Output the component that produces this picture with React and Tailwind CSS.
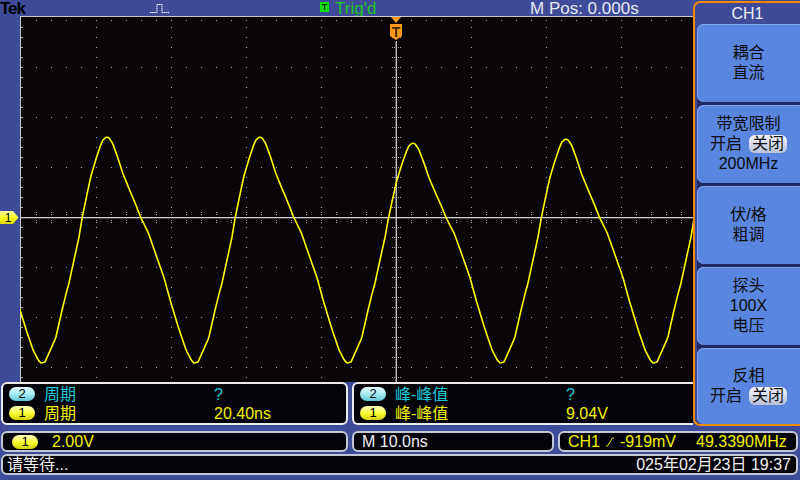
const FONT = "font-['Liberation_Sans','Noto_Sans_CJK_SC',sans-serif]";

// one period of the trace, measured from the trough (page x 41): [t, y]
const PERIOD = [
  [0, 363], [4, 362], [8, 353], [14.7, 338], [21.3, 309], [25, 294], [28, 283], [33, 260], [38, 237], [41.3, 217],
  [46.3, 193], [49.7, 177], [54.7, 160], [59.7, 145], [62, 140], [65.3, 137], [68, 138], [71.5, 143], [76.6, 157],
  [81.7, 173], [88.6, 190], [93.7, 202], [99.6, 217], [107.4, 233], [114.3, 253], [122.8, 277], [129.7, 302],
  [138.2, 330], [145.1, 350], [150.2, 360], [153, 363],
];
const PEAK_DROP = { 2: 6, 3: 2 };

function traceY(x) {
  const rel = x - 41;
  const k = Math.floor(rel / 153);
  const t = rel - k * 153;
  let y = 363;
  for (let i = 1; i < PERIOD.length; i++) {
    const [t0, y0] = PERIOD[i - 1];
    const [t1, y1] = PERIOD[i];
    if (t <= t1) {
      y = y0 + ((t - t0) / (t1 - t0)) * (y1 - y0);
      break;
    }
  }
  const drop = PEAK_DROP[k] || 0;
  return y + drop * Math.max(0, (250 - y) / 113);
}

function Scope() {
  // drawing coords: origin is page (20, 15); the svg shows page y 16..382
  let d = '';
  const dot = (x, y, w = 1) => { d += `M${x} ${y}h${w}v1h-${w}z`; };
  for (const y of [52, 102, 152, 252, 302, 352]) for (let x = 16; x < 673; x += 15) dot(x, y);
  for (const x of [76, 151, 226, 301, 451, 526, 601]) for (let y = 12; y < 367; y += 10) dot(x, y);
  for (let x = 16; x < 673; x += 15) for (const o of [-5, -3, 3, 5]) dot(x, 202 + o);
  for (let y = 12; y < 367; y += 10) for (const o of [-4, -2, 2, 4]) dot(376 + o, y);
  for (let x = 16; x < 673; x += 15) dot(x, 5);
  for (let y = 12; y < 367; y += 10) dot(1, y, 2);

  const pts = [];
  for (let x = 20; x <= 694; x++) pts.push(`${x - 20},${(traceY(x) - 15).toFixed(1)}`);

  return (
    <svg width="673" height="366" viewBox="0 1 673 366" className="block bg-[#0a0608]">
      <path d={d} fill="#a4a4a4" />
      <rect x="0" y="1" width="673" height="1" fill="#c8c8c8" />
      <rect x="0" y="1" width="1" height="366" fill="#c8c8c8" />
      <rect x="0" y="202" width="673" height="1.3" fill="#cfcfcf" />
      <rect x="375.6" y="26" width="1.3" height="341" fill="#cfcfcf" />
      <polyline points={pts.join(' ')} fill="none" stroke="#ffff00" strokeWidth="1.6" strokeLinejoin="round" />
      <polygon points="371,2 381,2 376,8" fill="#ff9a1a" />
      <path d="M370 9h12v12l-6 4l-6-4z" fill="#ff9a1a" />
      <text x="376" y="22" textAnchor="middle" fontSize="14" fontWeight="bold" fill="#4a2800" fontFamily="Liberation Sans">T</text>
    </svg>
  );
}

function GroundMarker() {
  return (
    <svg width="19" height="13" className="block">
      <defs>
        <linearGradient id="gm" x1="0" y1="0" x2="0" y2="1">
          <stop offset="0" stopColor="#ffffb0" />
          <stop offset="0.5" stopColor="#ffff20" />
          <stop offset="1" stopColor="#d8d800" />
        </linearGradient>
      </defs>
      <path d="M0 0h13l5.5 6.5l-5.5 6.5h-13z" fill="url(#gm)" />
      <text x="8" y="11" textAnchor="middle" fontSize="12" fill="#000" fontFamily="Liberation Sans">1</text>
    </svg>
  );
}

function TopBar() {
  return (
    <div className="h-[16px] flex items-start leading-[18px] whitespace-nowrap">
      <div className="w-[150px] text-[17px] font-bold text-black tracking-[-1px]">Tek</div>
      <div className="w-[170px] pt-[3px]">
        <svg width="19" height="11" className="block">
          <path d="M0 9.5h7v-8h5v8h7" fill="none" stroke="#ffffff" strokeWidth="1" strokeDasharray="1.5 0.6" />
        </svg>
      </div>
      <div className="w-[210px] flex items-start">
        <span className="mt-[2px] w-[9px] h-[10px] bg-[#10e010] text-[9px] leading-[10px] font-bold text-[#063006] flex justify-center">T</span>
        <span className="ml-[6px] text-[17px] text-[#20c820]">Trig'd</span>
      </div>
      <div className="text-[17px] text-[#e6e8f2]">M Pos: 0.000s</div>
    </div>
  );
}

function Badge({ n, tone }) {
  const c = tone === 'cyan'
    ? 'from-[#e4fcff] via-[#a6ecf4] to-[#5cc8d8]'
    : 'from-[#ffffb8] via-[#ffff30] to-[#d0d000]';
  return (
    <span className={`w-[26px] h-[14px] rounded-full bg-linear-to-b ${c} text-black text-[13px] leading-[14px] flex justify-center shrink-0`}>
      {n}
    </span>
  );
}

function MeasRow({ n, tone, label, value, labelW }) {
  const col = tone === 'cyan' ? 'text-[#1cc8d8]' : 'text-[#f2f200]';
  return (
    <div className={`flex items-center h-[19px] ${col}`}>
      <Badge n={n} tone={tone} />
      <span className={`ml-[9px] ${labelW}`}>{label}</span>
      <span>{value}</span>
    </div>
  );
}

function MeasBox({ className, label, v2, v1, labelW }) {
  return (
    <div className={`h-[43px] bg-[#05030a] border-2 border-[#ececec] flex flex-col justify-center pl-[6px] leading-[19px] ${className}`}>
      <MeasRow n="2" tone="cyan" label={label} value={v2} labelW={labelW} />
      <MeasRow n="1" tone="yellow" label={label} value={v1} labelW={labelW} />
    </div>
  );
}

function MenuBtn({ children, className = 'h-[78px]' }) {
  return (
    <div className={`rounded-l-[7px] bg-[#5a86e0] shadow-[inset_0_1px_0_#86a8ee,inset_1px_0_0_#7c9eea] flex flex-col items-center justify-center leading-[20px] text-[#0c0c0c] ${className}`}>
      {children}
    </div>
  );
}

function OnOff() {
  return (
    <div className="flex items-center">
      <span>开启</span>
      <span className="ml-[7px] rounded-[6px] bg-linear-to-b from-[#f4f6fc] to-[#b8c2d8] px-[3px] leading-[18px]">关闭</span>
    </div>
  );
}

function Menu() {
  return (
    <div className="w-[107px] mt-[1px] h-[425px] border-2 border-r-0 border-[#f08a00] rounded-l-[7px] flex flex-col">
      <div className="h-[21px] text-center text-[16px] leading-[22px] text-[#eceef6]">CH1</div>
      <div className="flex-1 pl-[2px] flex flex-col">
        <div className="flex-1 flex flex-col gap-[3px] bg-[#202a66] rounded-l-[7px]">
          <MenuBtn><span>耦合</span><span>直流</span></MenuBtn>
          <MenuBtn><span>带宽限制</span><OnOff /><span>200MHz</span></MenuBtn>
          <MenuBtn><span>伏/格</span><span>粗调</span></MenuBtn>
          <MenuBtn><span>探头</span><span>100X</span><span>电压</span></MenuBtn>
          <MenuBtn className="flex-1"><span>反相</span><OnOff /></MenuBtn>
        </div>
      </div>
    </div>
  );
}

function SlopeIcon() {
  return (
    <svg width="8" height="10" className="block">
      <path d="M0 9h1.5l5-8h1.5" fill="none" stroke="#f2f200" strokeWidth="1" />
    </svg>
  );
}

export default function App() {
  const box = 'h-[21px] bg-[#05030a] border-2 border-[#c4c8d4] rounded-[6px] flex items-center leading-[18px]';
  return (
    <div className={`w-[800px] h-[480px] bg-[#3e4b98] flex flex-col overflow-hidden text-[16px] ${FONT}`}>
      <div className="flex h-[426px]">
        <div className="w-[693px] flex flex-col">
          <TopBar />
          <div className="flex h-[366px]">
            <div className="w-[20px] pt-[195px]">
              <GroundMarker />
            </div>
            <Scope />
          </div>
          <div className="flex gap-[4px] pl-[1px]">
            <MeasBox className="w-[347px] rounded-[6px]" label="周期" v2="?" v1="20.40ns" labelW="w-[170px]" />
            <MeasBox className="flex-1 border-r-0 rounded-l-[6px] pl-[5px]" label="峰-峰值" v2="?" v1="9.04V" labelW="w-[171px]" />
          </div>
        </div>
        <Menu />
      </div>

      <div className="flex flex-col gap-[2px] pt-[5px] pl-[1px] pr-[2px]">
        <div className="flex gap-[4px]">
          <div className={`${box} w-[347px] pl-[9px] text-[#f2f200]`}>
            <Badge n="1" tone="yellow" />
            <span className="ml-[14px]">2.00V</span>
          </div>
          <div className={`${box} w-[202px] pl-[8px] text-[#eceef2]`}>M 10.0ns</div>
          <div className={`${box} flex-1 pl-[8px] text-[#f2f200]`}>
            <span>CH1</span>
            <span className="ml-[6px]"><SlopeIcon /></span>
            <span className="ml-[6px]">-919mV</span>
            <span className="ml-[20px]">49.3390MHz</span>
          </div>
        </div>
        <div className={`${box} justify-between pl-[4px] pr-[5px] text-[#f2f2f2]`}>
          <span>请等待...</span>
          <span>025年02月23日 19:37</span>
        </div>
      </div>
    </div>
  );
}
